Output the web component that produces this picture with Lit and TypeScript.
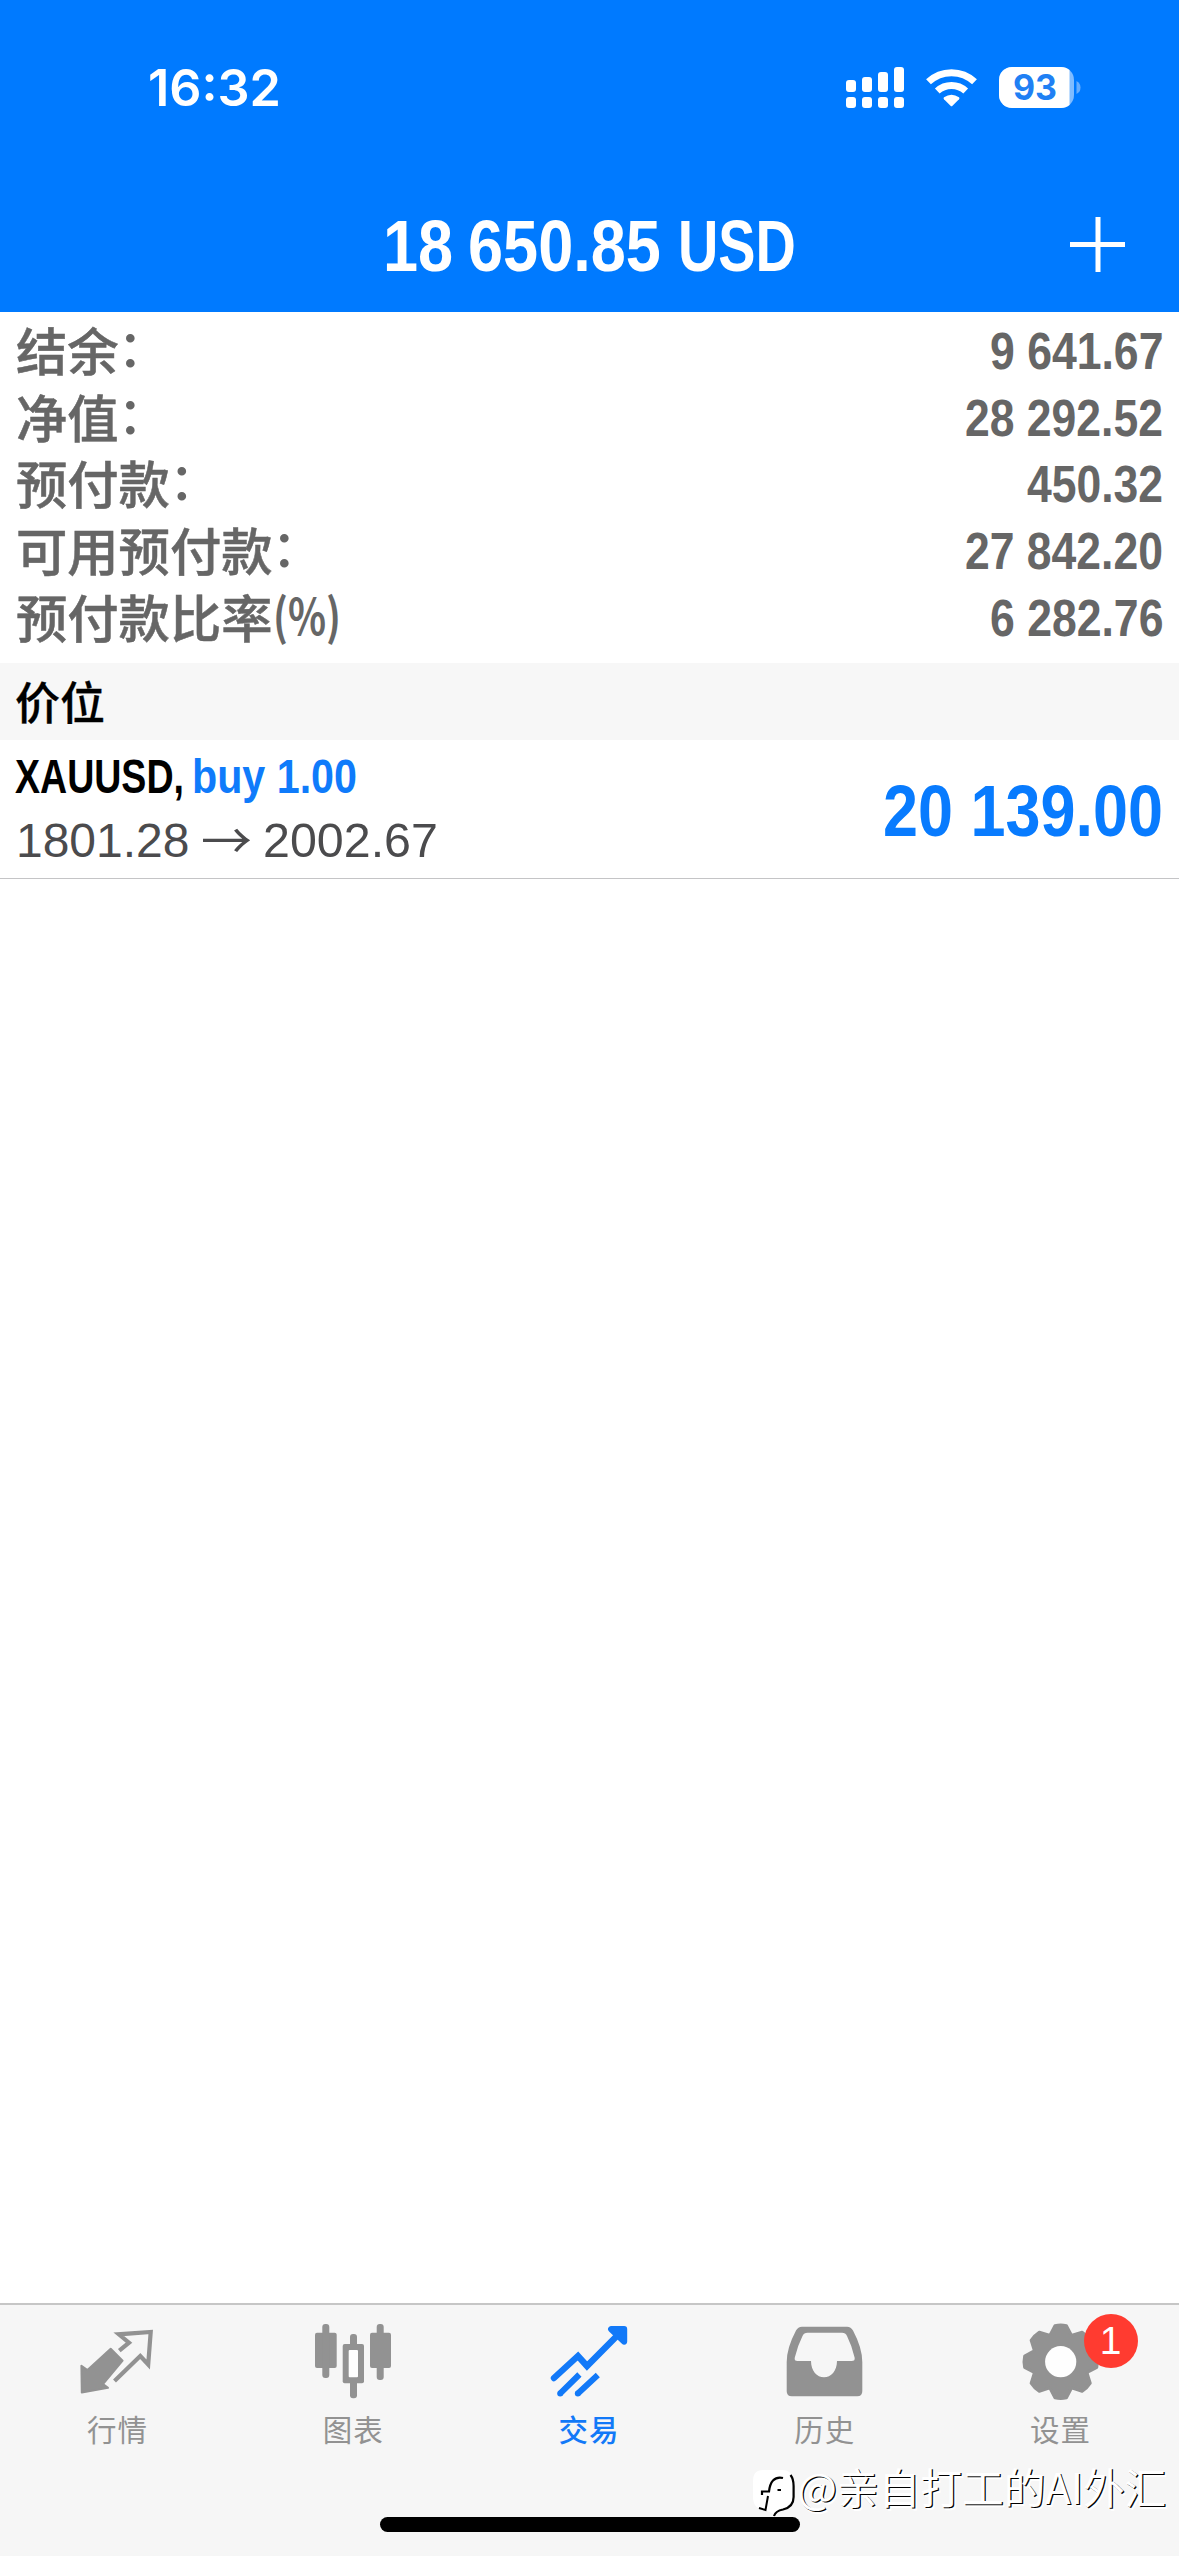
import { LitElement, html, css, svg } from "lit";
import { customElement, property } from "lit/decorators.js";

/** One line of condensed text, scaled horizontally to a fixed advance width. */
@customElement("fit-text")
export class FitText extends LitElement {
  @property() text = "";
  @property({ type: Number }) width = 100;
  @property({ type: Number }) size = 48;
  @property({ type: Number }) height = 64;
  @property({ type: Number }) base = 48;

  static styles = css`
    :host { display: block; flex: none; }
    svg { display: block; overflow: visible; }
    text { fill: currentColor; font-family: inherit; font-weight: inherit; white-space: pre; }
  `;

  render() {
    return html`<svg width=${this.width + 1} height=${this.height}>
      <text x="0" y=${this.base} font-size=${this.size}>${this.text}</text>
    </svg>`;
  }

  updated() {
    const node = this.renderRoot.querySelector("text") as SVGTextElement;
    const natural = node.getComputedTextLength();
    if (natural > 0) node.setAttribute("transform", `scale(${this.width / natural} 1)`);
  }
}

const gearPath = (cx: number, cy: number) => {
  const pt = (r: number, deg: number) => {
    const a = (deg * Math.PI) / 180;
    return `${(cx + r * Math.sin(a)).toFixed(2)} ${(cy - r * Math.cos(a)).toFixed(2)}`;
  };
  let d = "";
  for (let k = 0; k < 8; k++) {
    const c = k * 45;
    d += `${k ? "L" : "M"}${pt(30, c - 19)}L${pt(36.5, c - 9)}Q${pt(37.3, c)} ${pt(36.5, c + 9)}L${pt(30, c + 19)}Q${pt(28, c + 22.5)} ${pt(30, c + 26)}`;
  }
  return d + "Z";
};

const icons = {
  quotes: svg`
    <path d="M37.7 28.7 L49.6 40.7 L30 64 L35 67.8 L8.8 72.6 L8.4 45.7 L14.5 50 Z" fill="currentColor" stroke="currentColor" stroke-width="2" stroke-linejoin="round"/>
    <path d="M46.3 30.7 L56 22.7 L45.8 14.3 L77.7 12 L75.2 44.5 L67.3 36 L41.5 61" fill="none" stroke="currentColor" stroke-width="4.2"/>`,
  chart: svg`
    <g fill="currentColor">
      <rect x="6" y="12.7" width="21.7" height="35.3" rx="2"/><rect x="13.3" y="4" width="7" height="54" rx="3"/>
      <rect x="61" y="12.7" width="21" height="35.3" rx="2"/><rect x="67.7" y="4" width="7" height="56" rx="3"/>
      <rect x="33.7" y="24" width="21.3" height="39.3" rx="2"/><rect x="41" y="14" width="7" height="64.3" rx="3"/>
    </g>
    <rect x="39.7" y="30" width="9.3" height="27.3" rx="1" fill="#fdfdfd"/>`,
  trade: svg`
    <g transform="translate(0.8 0)">
      <path d="M9.2 58 L33.2 36 L42.2 46 L76 12" fill="none" stroke="currentColor" stroke-width="6.4" stroke-linecap="round"/>
      <path d="M66.4 9.2 H79.3 V21.6 Z" fill="currentColor" stroke="currentColor" stroke-width="6.2" stroke-linejoin="round"/>
      <path d="M15.2 73.7 L34.6 54.5 M32.8 73.7 L53 55" stroke="currentColor" stroke-width="6"/>
      <circle cx="15.4" cy="73.4" r="3"/><circle cx="33" cy="73.4" r="3"/>
    </g>`,
  history: svg`
    <path fill="currentColor" fill-rule="evenodd" d="M22 6.7 H67 Q71 6.7 73 10.5 Q82.3 28 82.3 42 V71.3 Q82.3 76.3 77.3 76.3 H11.7 Q6.7 76.3 6.7 71.3 V42 Q6.7 28 16 10.5 Q18 6.7 22 6.7 Z
      M27.5 12.7 Q24 12.7 22.5 16 Q17.5 26 14.8 37.5 Q14 41 17.5 41 H31 C31 51 37 57.3 44 57.3 C51 57.3 57 51 57 41 H71.5 Q75.4 41 74.6 37.5 Q72 26 67 16 Q65.5 12.7 62 12.7 Z"/>`,
  settings: svg`
    <path d=${gearPath(44.7, 41.7)} fill="currentColor" stroke="currentColor" stroke-width="3" stroke-linejoin="round"/>
    <circle cx="44.7" cy="41.7" r="15.6" fill="#fefefe"/>`,
};

const tabs = [
  { icon: icons.quotes, label: "行情" },
  { icon: icons.chart, label: "图表" },
  { icon: icons.trade, label: "交易", active: true },
  { icon: icons.history, label: "历史" },
  { icon: icons.settings, label: "设置", badge: "1" },
];

const summary = [
  { label: "结余", colon: true, value: "9 641.67", width: 173.5 },
  { label: "净值", colon: true, value: "28 292.52", width: 198 },
  { label: "预付款", colon: true, value: "450.32", width: 136 },
  { label: "可用预付款", colon: true, value: "27 842.20", width: 198 },
  { label: "预付款比率", colon: false, value: "6 282.76", width: 173.5 },
];

@customElement("app-root")
export class AppRoot extends LitElement {
  static styles = css`
    :host {
      display: flex; flex-direction: column; position: relative;
      width: 1179px; height: 2556px; overflow: hidden; background: #fff;
      font-family: "Liberation Sans", "Noto Sans CJK SC", sans-serif;
    }
    * { box-sizing: border-box; }
    svg { display: block; overflow: visible; }
    .head { background: #007aff; color: #fff; height: 312px; flex: none; display: flex; flex-direction: column; }
    .status { height: 176px; display: flex; justify-content: space-between; padding: 58px 98px 0 148px; }
    .time { font-family: Inter, sans-serif; font-weight: 600; }
    .sys { font-family: Inter, sans-serif; font-weight: 700; }
    .bar { display: grid; grid-template-columns: 1fr auto 1fr; padding-top: 29px; font-weight: 700; }
    .title { display: flex; gap: 16px; }
    .digits { word-spacing: -3px; }
    .plus { justify-self: end; margin: 12px 53px 0 0; }
    .sum { flex: none; height: 351px; padding: 9px 15px 0 16px; color: #666; }
    .row { display: flex; justify-content: space-between; height: 66.67px; font-weight: 700; }
    .lab { font-family: "Noto Sans CJK SC", sans-serif; font-weight: 500; font-size: 51.3px; line-height: 66px; height: 66px; margin-top: -5px; white-space: nowrap; display: flex; -webkit-text-stroke: 0.5px #666; }
    .colon { position: relative; top: -4px; left: -1px; -webkit-text-stroke: 0; }
    .pct { font-weight: 700; margin-top: 4px; -webkit-text-stroke: 0; }
    .sec { flex: none; height: 77px; background: #f7f7f7; color: #000; padding-left: 15px; font: 500 45px/75px "Noto Sans CJK SC", sans-serif; -webkit-text-stroke: 0.3px #000; }
    .pos { flex: none; height: 139px; border-bottom: 1px solid #c4c4c6; display: flex; justify-content: space-between; padding: 10px 15px 0 15px; }
    .sym { display: flex; gap: 7px; font-weight: 700; color: #000; }
    .blue { color: #0f7bfb; }
    .prices { display: flex; color: #4b4b4d; padding-left: 1px; }
    .arrow { font-family: "Noto Sans CJK SC", sans-serif; font-weight: 400; margin: 0 10px 0 10.5px; }
    .profit { color: #087bfe; font-weight: 700; margin-top: 15px; }
    .fill { flex: 1; }
    .tabs { flex: none; height: 253px; border-top: 2px solid #c6c6c6; background: #f6f6f6; display: grid; grid-template-columns: repeat(5, 1fr); }
    .tab { display: flex; flex-direction: column; align-items: center; color: #929292; padding-top: 15px; fill: currentColor; }
    .tab.on { color: #1279f8; }
    .ic { position: relative; width: 90px; height: 84px; }
    .tl { font: 400 29.5px/44px "Noto Sans CJK SC", sans-serif; letter-spacing: 1px; margin: 2px 1px 0 0; }
    .tab.on .tl { font-weight: 500; }
    .badge { position: absolute; left: 67.5px; top: -6px; width: 54px; height: 54px; border-radius: 50%; background: #ff3b30; color: #fff; font: 400 39px/53px "Liberation Sans", sans-serif; text-align: center; }
    .home { position: absolute; left: 380px; top: 2517px; width: 420px; height: 15px; border-radius: 8px; background: #000; }
    .mark { position: absolute; left: 750px; top: 2464px; display: flex; }
    .handle { font: 400 41.7px/50px "Noto Sans CJK SC", sans-serif; margin: -3px 0 0 -2.5px; white-space: nowrap; color: #fff; text-shadow: 1.2px 1.2px 0 #000, 2.6px 2.6px 0 #fff; }
  `;

  private system() {
    return html`<svg class="sys" width="240" height="60" viewBox="841 58 240 60">
      <g fill="#fff">
        <rect x="846" y="80" width="10" height="12" rx="3"/><rect x="862" y="77" width="10" height="15" rx="3"/>
        <rect x="878" y="72" width="10" height="20" rx="3"/><rect x="894" y="67" width="10" height="25" rx="3"/>
        <rect x="846" y="97" width="10" height="11" rx="3"/><rect x="862" y="97" width="10" height="11" rx="3"/>
        <rect x="878" y="97" width="10" height="11" rx="3"/><rect x="894" y="97" width="10" height="11" rx="3"/>
        <path d="M944 97.3 Q951.5 92 959 97.3 Q960 98.3 959 99.3 L952.5 105.8 Q951.5 106.8 950.5 105.8 L944 99.3 Q943 98.3 944 97.3Z"/>
      </g>
      <g fill="none" stroke="#fff" stroke-width="7">
        <path d="M928.5 81.8 A33.5 33.5 0 0 1 974.5 81.8"/>
        <path d="M937.3 91 A21 21 0 0 1 965.7 91"/>
      </g>
      <rect x="999" y="67" width="75" height="41" rx="13" fill="#80bcff"/>
      <path d="M1012 67 H1061 Q1066 67 1069.5 70 V105 Q1066 108 1061 108 H1012 A13 13 0 0 1 999 95 V80 A13 13 0 0 1 1012 67Z" fill="#fff"/>
      <path d="M1076.5 81 Q1080.5 83 1080.5 87.5 Q1080.5 92 1076.5 94Z" fill="#66adff"/>
      <text x="1013" y="100" font-size="35" textLength="44" lengthAdjust="spacingAndGlyphs" fill="#2080f4">93</text>
    </svg>`;
  }

  render() {
    return html`
      <div class="head">
        <div class="status">
          <fit-text class="time" text="16:32" width="133" size="50.5" base="48"></fit-text>
          ${this.system()}
        </div>
        <div class="bar">
          <span></span>
          <div class="title">
            <fit-text class="digits" text="18 650.85" width="278" size="72" height="84" base="66"></fit-text>
            <fit-text text="USD" width="118" size="73" height="84" base="66"></fit-text>
          </div>
          <svg class="plus" width="56" height="56"><path d="M28 0V55M0 27.5H55" stroke="#fff" stroke-width="5"/></svg>
        </div>
      </div>
      <div class="sum">
        ${summary.map((r) => html`<div class="row">
          <div class="lab">${r.label}${r.colon ? html`<span class="colon">：</span>` : html`<fit-text class="pct" text="(%)" width="68" size="49.5" base="47.5"></fit-text>`}</div>
          <fit-text text=${r.value} width=${r.width} size="51" base="48"></fit-text>
        </div>`)}
      </div>
      <div class="sec">价位</div>
      <div class="pos">
        <div>
          <div class="sym">
            <fit-text text="XAUUSD," width="169" size="48.5" height="64" base="43"></fit-text>
            <fit-text class="blue" text="buy 1.00" width="165" size="48.5" height="64" base="43"></fit-text>
          </div>
          <div class="prices">
            <fit-text text="1801.28" width="173.5" size="48" base="43"></fit-text>
            <fit-text class="arrow" text="→" width="51" size="49" base="44.5"></fit-text>
            <fit-text text="2002.67" width="175" size="48" base="43"></fit-text>
          </div>
        </div>
        <fit-text class="profit" text="20 139.00" width="280" size="72" height="90" base="71.5"></fit-text>
      </div>
      <div class="fill"></div>
      <div class="tabs">
        ${tabs.map((t) => html`<div class="tab ${t.active ? "on" : ""}">
          <div class="ic"><svg width="90" height="84">${t.icon}</svg>${t.badge ? html`<span class="badge">${t.badge}</span>` : ""}</div>
          <div class="tl">${t.label}</div>
        </div>`)}
      </div>
      <div class="home"></div>
      <div class="mark">
        <svg width="50" height="56">
          <path d="M13 6 H32 Q43 6 43 18 V33 Q43 43 32 45 Q26 46 23 50 Q20 47 15 46.5 Q3 45 3 33 V17 Q3 6 13 6Z" fill="#fff"/>
          <path d="M40.5 11 Q43.6 15 43.6 22 V33 Q43.6 43 33 45.5 Q25.5 47 24 52" fill="none" stroke="#000" stroke-width="2.2"/>
          <path d="M33 14 Q27 12.5 23 16.5 Q19.8 20 19 27.5 H12 V31" fill="none" stroke="#000" stroke-width="2.2"/>
          <path d="M18 32 L15.5 46 L9 44" fill="none" stroke="#000" stroke-width="2"/>
          <path d="M27.5 26 H31" stroke="#000" stroke-width="2"/>
        </svg>
        <span class="handle">@亲自打工的AI外汇</span>
      </div>
    `;
  }
}
